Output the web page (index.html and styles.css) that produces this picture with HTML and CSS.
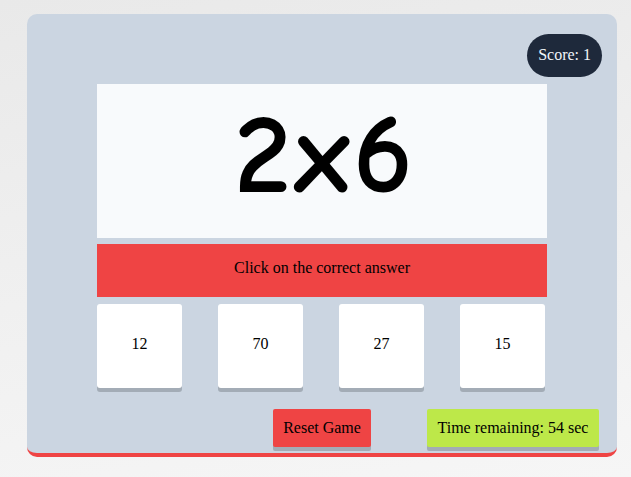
FILE: index.html
```html
<!DOCTYPE html>
<html>
<head>
<meta charset="utf-8">
<link rel="stylesheet" href="styles.css">
</head>
<body>
<div class="game">
  <div class="top">
    <div class="score">Score: 1</div>
  </div>
  <div class="board">
    <div class="question">2x6</div>
    <div class="prompt">Click on the correct answer</div>
    <div class="answers">
      <div class="answer">12</div>
      <div class="answer">70</div>
      <div class="answer">27</div>
      <div class="answer">15</div>
    </div>
  </div>
  <div class="footer">
    <button class="reset">Reset Game</button>
    <div class="timer">Time remaining: 54 sec</div>
  </div>
</div>
</body>
</html>
```
FILE: styles.css
```css
html, body {
  margin: 0;
  height: 100%;
}
body {
  background: linear-gradient(170deg, #e9e9e9 0%, #f1f1f1 60%, #f6f6f6 100%);
  font-family: "Liberation Serif", "Times New Roman", serif;
  font-size: 16px;
  color: #000;
  padding: 14px 14px 0 27px;
  box-sizing: border-box;
}
.game {
  width: 590px;
  height: 443px;
  box-sizing: border-box;
  background: #cbd5e1;
  border-radius: 10px;
  border-bottom: 4px solid #ef4444;
  display: flex;
  flex-direction: column;
}
.top {
  display: flex;
  justify-content: flex-end;
  padding: 20px 15px 0 0;
  height: 70px;
  box-sizing: border-box;
}
.score {
  background: #1e293b;
  color: #f1f5f9;
  height: 43px;
  padding: 0 11px 2px;
  box-sizing: border-box;
  border-radius: 22px;
  display: flex;
  align-items: center;
}
.board {
  margin-left: 70px;
  width: 450px;
  display: flex;
  flex-direction: column;
}
.question {
  height: 154px;
  background: #f8fafc;
  display: flex;
  align-items: center;
  justify-content: center;
  font-family: "Comic Sans MS", "Comic Neue", cursive;
  font-weight: bold;
  font-size: 114px;
  letter-spacing: 3px;
  line-height: 1;
  padding: 0 0 12px 6px;
  box-sizing: border-box;
}
.prompt {
  margin-top: 6px;
  height: 53px;
  padding-bottom: 5px;
  box-sizing: border-box;
  background: #ef4444;
  display: flex;
  align-items: center;
  justify-content: center;
}
.answers {
  margin-top: 7px;
  display: flex;
  gap: 36px;
}
.answer {
  width: 85px;
  height: 84px;
  padding-bottom: 4px;
  box-sizing: border-box;
  background: #fff;
  border-radius: 3px;
  box-shadow: 0 4px 0 #a3acb6;
  display: flex;
  align-items: center;
  justify-content: center;
}
.footer {
  margin-top: 21px;
  display: flex;
  gap: 56px;
  padding-left: 246px;
}
.reset {
  width: 98px;
  height: 38px;
  border: 0;
  border-radius: 2px;
  background: #ef4444;
  box-shadow: 0 4px 0 #a3acb6;
  font-family: inherit;
  font-size: 16px;
  color: #000;
  padding: 0 0 1px;
}
.timer {
  width: 172px;
  height: 38px;
  padding-bottom: 1px;
  box-sizing: border-box;
  border-radius: 2px;
  background: #bde849;
  box-shadow: 0 4px 0 #a3acb6;
  display: flex;
  align-items: center;
  justify-content: center;
}
```
